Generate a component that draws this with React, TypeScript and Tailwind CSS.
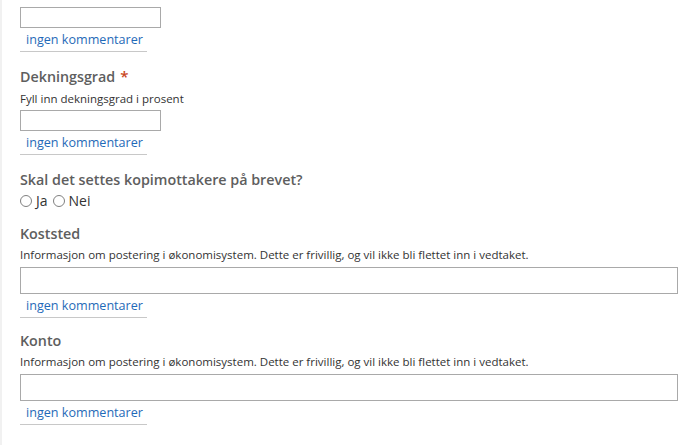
import React from "react";

const font = { fontFamily: '"Open Sans", "Noto Sans", sans-serif' };

function Link() {
  return (
    <div className="w-[127px] border-b border-[#c8c8c8] pl-[6px] pt-[2px] pb-[1px] text-[12.6px] leading-[20px] text-[#1f6ab8]">
      ingen kommentarer
    </div>
  );
}

function Label({ children, required }: { children: React.ReactNode; required?: boolean }) {
  return (
    <div className="h-[20px] text-[14.3px] font-semibold leading-[20px] text-[#5e5e5e]">
      {children}
      {required && <span className="ml-[5px] text-[15px] leading-[20px] text-[#c9461c]">*</span>}
    </div>
  );
}

function Help({ children, mt }: { children: React.ReactNode; mt: string }) {
  return <div className={`${mt} text-[11.5px] leading-[16px] text-[#333]`}>{children}</div>;
}

function Radio({ label }: { label: string }) {
  return (
    <span className="inline-flex items-center gap-[4px]">
      <span className="inline-block h-[12px] w-[12px] rounded-full border border-[#808080] bg-white" />
      <span>{label}</span>
    </span>
  );
}

export default function App() {
  return (
    <div style={font} className="flex min-h-[445px] w-[698px] bg-white">
      <div className="w-[2px] shrink-0 bg-[#f1f1f1]" />
      <div className="flex-1 pl-[18px] pr-[20px] pt-[7px]">
        <div className="h-[21px] w-[141px] border border-[#a9a9a9] bg-white" />
        <Link />

        <div className="mt-[14px]">
          <Label required>Dekningsgrad</Label>
          <Help mt="mt-[5px]">Fyll inn dekningsgrad i prosent</Help>
          <div className="mt-[3px] h-[21px] w-[141px] border border-[#a9a9a9] bg-white" />
          <Link />
        </div>

        <div className="mt-[15px]">
          <Label>Skal det settes kopimottakere på brevet?</Label>
          <div className="mt-[1px] flex items-center gap-[5px] text-[14px] leading-[20px] text-[#333]">
            <Radio label="Ja" />
            <Radio label="Nei" />
          </div>
        </div>

        <div className="mt-[13px]">
          <Label>Koststed</Label>
          <Help mt="mt-[3px]">Informasjon om postering i økonomisystem. Dette er frivillig, og vil ikke bli flettet inn i vedtaket.</Help>
          <div className="mt-[4px] h-[27px] w-full border border-[#a9a9a9] bg-white" />
          <Link />
        </div>

        <div className="mt-[13px]">
          <Label>Konto</Label>
          <Help mt="mt-[3px]">Informasjon om postering i økonomisystem. Dette er frivillig, og vil ikke bli flettet inn i vedtaket.</Help>
          <div className="mt-[4px] h-[27px] w-full border border-[#a9a9a9] bg-white" />
          <Link />
        </div>
      </div>
    </div>
  );
}
